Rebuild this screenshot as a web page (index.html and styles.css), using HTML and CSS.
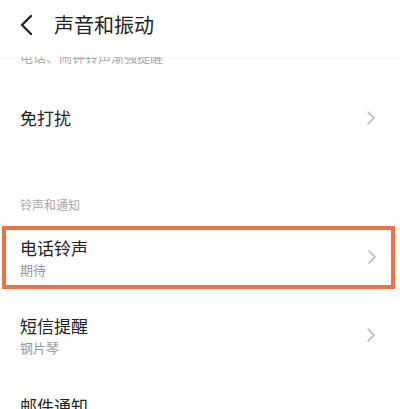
FILE: index.html
```html
<!DOCTYPE html>
<html lang="zh-CN">
<head>
<meta charset="utf-8">
<title>声音和振动</title>
<link rel="stylesheet" href="styles.css">
</head>
<body>
<div class="screen">
  <header class="topbar">
    <svg class="back" width="14" height="22" viewBox="0 0 14 22"><polyline points="12,2 3,11 12,20" fill="none" stroke="#222" stroke-width="2.4" stroke-linecap="round" stroke-linejoin="round"/></svg>
    <h1 class="title">声音和振动</h1>
  </header>
  <main class="content">
    <div class="partial"><span class="sub">电话、闹钟铃声渐强提醒</span></div>
    <div class="row single">
      <div class="texts"><div class="name">免打扰</div></div>
      <svg class="chev" width="10" height="16" viewBox="0 0 10 16"><polyline points="2,2 8,8 2,14" fill="none" stroke="#b8b8b8" stroke-width="1.6" stroke-linecap="round" stroke-linejoin="round"/></svg>
    </div>
    <div class="section">铃声和通知</div>
    <div class="row highlighted">
      <div class="texts"><div class="name">电话铃声</div><div class="sub">期待</div></div>
      <svg class="chev" width="10" height="16" viewBox="0 0 10 16"><polyline points="2,2 8,8 2,14" fill="none" stroke="#b8b8b8" stroke-width="1.6" stroke-linecap="round" stroke-linejoin="round"/></svg>
    </div>
    <div class="row double">
      <div class="texts"><div class="name">短信提醒</div><div class="sub">钢片琴</div></div>
      <svg class="chev" width="10" height="16" viewBox="0 0 10 16"><polyline points="2,2 8,8 2,14" fill="none" stroke="#b8b8b8" stroke-width="1.6" stroke-linecap="round" stroke-linejoin="round"/></svg>
    </div>
    <div class="row double">
      <div class="texts"><div class="name">邮件通知</div></div>
    </div>
  </main>
</div>
</body>
</html>
```
FILE: styles.css
```css
* { box-sizing: border-box; }
html, body { margin: 0; padding: 0; background: #fff; }
body { font-family: "Noto Sans CJK SC", "Noto Sans", sans-serif; color: #222; }
.screen { width: 400px; height: 409px; overflow: hidden; display: flex; flex-direction: column; }
.topbar { height: 57px; flex: none; display: flex; align-items: center; padding-left: 19px; gap: 21px; background: #fff; position: relative; z-index: 1; box-shadow: 0 1px 1px rgba(0,0,0,0.03); }
.back { display: block; margin-top: -8px; }
.title { margin: 0; margin-top: -8px; font-size: 20px; font-weight: 400; line-height: 28px; color: #222; }
.content { flex: 1; overflow: hidden; }
.partial { height: 37px; padding-left: 20px; margin-top: -1px; }
.partial .sub { display: block; margin-top: -8px; font-size: 13px; line-height: 16px; color: #aaa; }
.row { display: flex; align-items: flex-start; justify-content: space-between; padding: 0 24px 0 20px; }
.row.single { height: 64px; align-items: center; }
.row.double { height: 80px; padding-top: 18.5px; }
.row.double .chev { margin-top: 13.5px; }
.row.highlighted { height: 63px; margin: 5.5px 5px 6.5px 2px; border: 4.5px solid #ee7145; padding: 6px 14.5px 0 14px; }
.row.highlighted .chev { margin-top: 13.5px; }
.name { font-size: 17px; line-height: 24px; color: #222; }
.sub { font-size: 13px; line-height: 18px; color: #999; margin-top: 1px; }
.section { height: 70px; padding: 46px 0 0 20px; font-size: 12px; line-height: 18px; color: #a6a6a6; }
.chev { display: block; }
```
